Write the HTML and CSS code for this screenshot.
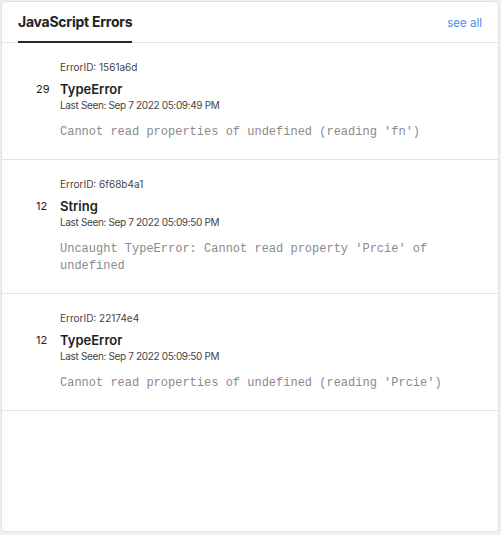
FILE: index.html
```html
<!DOCTYPE html>
<html>
<head>
<meta charset="utf-8">
<link rel="stylesheet" href="styles.css">
</head>
<body>
<div class="card">
  <div class="header">
    <div class="tab">JavaScript Errors</div>
    <a class="see-all">see all</a>
  </div>
  <div class="row">
    <div class="count"></div>
    <div class="eid">ErrorID: 1561a6d</div>
    <div class="count">29</div>
    <div class="name">TypeError</div>
    <div></div>
    <div class="seen">Last Seen: Sep 7 2022 05:09:49 PM</div>
    <div></div>
    <div class="msg">Cannot read properties of undefined (reading 'fn')</div>
  </div>
  <div class="row">
    <div class="count"></div>
    <div class="eid">ErrorID: 6f68b4a1</div>
    <div class="count">12</div>
    <div class="name">String</div>
    <div></div>
    <div class="seen">Last Seen: Sep 7 2022 05:09:50 PM</div>
    <div></div>
    <div class="msg">Uncaught TypeError: Cannot read property 'Prcie' of undefined</div>
  </div>
  <div class="row">
    <div class="count"></div>
    <div class="eid">ErrorID: 22174e4</div>
    <div class="count">12</div>
    <div class="name">TypeError</div>
    <div></div>
    <div class="seen">Last Seen: Sep 7 2022 05:09:50 PM</div>
    <div></div>
    <div class="msg">Cannot read properties of undefined (reading 'Prcie')</div>
  </div>
</div>
</body>
</html>
```
FILE: styles.css
```css
html, body {
  margin: 0;
  padding: 0;
  background: #efefef;
}
body {
  padding: 1px 2px 0 1px;
  font-family: Inter, "Noto Sans", sans-serif;
  color: #222;
}
.card {
  background: #fff;
  border: 1px solid #e2e2e2;
  border-radius: 4px;
  box-sizing: border-box;
  height: 531px;
}
.header {
  display: flex;
  justify-content: space-between;
  align-items: flex-end;
  height: 40px;
  border-bottom: 1px solid #e4e4e4;
  padding: 0 16px 0 16px;
}
.tab {
  font-size: 14px;
  font-weight: 700;
  color: #222;
  line-height: 18px;
  padding-bottom: 10px;
  border-bottom: 2px solid #2a2a2a;
  margin-bottom: -1px;
  letter-spacing: -0.25px;
}
.see-all {
  font-size: 11.5px;
  line-height: 14px;
  color: #4b8fea;
  align-self: flex-start;
  margin-top: 14px;
}
.row {
  display: grid;
  grid-template-columns: 24px 1fr;
  padding: 17px 40px 18px 34px;
  border-bottom: 1px solid #e4e4e4;
}
.eid {
  font-size: 10px;
  color: #444;
  line-height: 14px;
  margin-bottom: 7px;
}
.count {
  font-size: 11px;
  color: #222;
  line-height: 16px;
}
.name {
  font-size: 13px;
  font-weight: 600;
  color: #222;
  line-height: 16px;
}
.seen {
  font-size: 10px;
  color: #444;
  line-height: 14px;
  margin-top: 1px;
  margin-bottom: 12px;
  letter-spacing: -0.35px;
}
.msg {
  font-family: "Liberation Mono", "Courier New", monospace;
  font-size: 12px;
  color: #8a8a8a;
  line-height: 17px;
}
```
